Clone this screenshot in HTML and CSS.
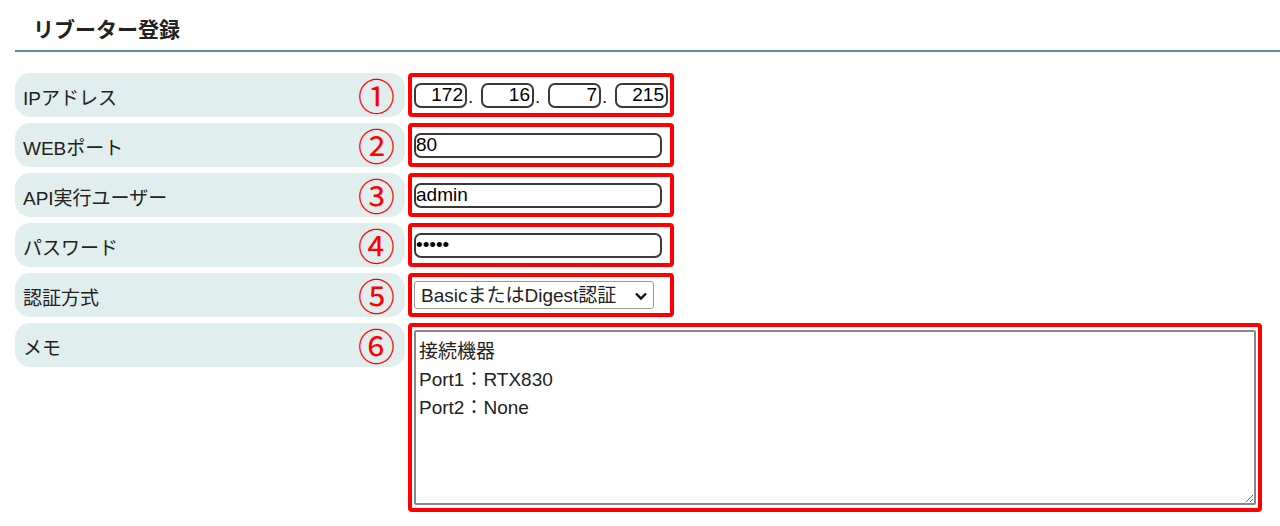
FILE: index.html
```html
<!DOCTYPE html>
<html lang="ja">
<head>
  <meta charset="UTF-8">
  <title>リブーター登録</title>
  <link rel="stylesheet" href="styles.css">
</head>
<body>

<div class="page">
  <h1 class="title">リブーター登録</h1>

  <div class="form">
    <div class="row">
      <div class="label">IPアドレス<span class="num">①</span></div>
      <div class="mark">
        <div class="ip">
          <input type="text" class="ip-part" value="172"><span class="dot">.</span>
          <input type="text" class="ip-part" value="16"><span class="dot">.</span>
          <input type="text" class="ip-part" value="7"><span class="dot">.</span>
          <input type="text" class="ip-part" value="215">
        </div>
      </div>
    </div>

    <div class="row">
      <div class="label">WEBポート<span class="num">②</span></div>
      <div class="mark"><input type="text" class="field" value="80"></div>
    </div>

    <div class="row">
      <div class="label">API実行ユーザー<span class="num">③</span></div>
      <div class="mark"><input type="text" class="field" value="admin"></div>
    </div>

    <div class="row">
      <div class="label">パスワード<span class="num">④</span></div>
      <div class="mark"><input type="password" class="field" value="admin"></div>
    </div>

    <div class="row">
      <div class="label">認証方式<span class="num">⑤</span></div>
      <div class="mark">
        <div class="select-wrap">
          <select class="auth">
            <option>BasicまたはDigest認証</option>
          </select>
          <svg class="chevron" width="14" height="10" viewBox="0 0 14 10">
            <path d="M2 2.5 L7 7.5 L12 2.5" fill="none" stroke="#111" stroke-width="2.4"/>
          </svg>
        </div>
      </div>
    </div>

    <div class="row">
      <div class="label">メモ<span class="num">⑥</span></div>
      <div class="mark wide">
        <textarea class="memo">接続機器
Port1：RTX830
Port2：None</textarea>
      </div>
    </div>
  </div>
</div>

</body>
</html>
```

FILE: styles.css
```css
body {
  margin: 0;
  font-family: "Liberation Sans", "Noto Sans CJK JP", sans-serif;
  color: #222;
  background: #fff;
}

.page {
  margin-left: 15px;
}

.title {
  margin: 0;
  height: 52px;
  box-sizing: border-box;
  padding: 13px 0 0 18px;
  font-size: 21px;
  font-weight: bold;
  border-bottom: 2px solid #5e8c8c;
}

.form {
  padding-top: 21px;
}

.row {
  display: flex;
  align-items: flex-start;
  margin-bottom: 6px;
}

.label {
  width: 390px;
  height: 44px;
  box-sizing: border-box;
  padding: 2px 10px 0 8px;
  display: flex;
  align-items: center;
  justify-content: space-between;
  background-color: #e1eeee;
  border-radius: 15px;
  font-size: 19px;
}

.num {
  color: #ff0000;
  font-family: "Noto Sans CJK JP", sans-serif;
  font-size: 37px;
  line-height: 1;
  margin-top: -2px;
}

.mark {
  margin-left: 3px;
  width: 266px;
  height: 44px;
  box-sizing: border-box;
  padding: 0 4px 0 2px;
  display: flex;
  align-items: center;
  border: 4px solid #ff0000;
  border-radius: 4px;
}

.mark.wide {
  width: 854px;
  height: 189px;
  padding: 3px 2px;
  align-items: stretch;
}

.ip {
  display: flex;
  align-items: center;
  font-size: 19px;
}

.ip-part {
  width: 53px;
  height: 25px;
  box-sizing: border-box;
  margin: 0;
  padding: 0 2px 0 0;
  text-align: right;
  font: 19px "Liberation Sans", sans-serif;
  border: 2px solid #3a3a3a;
  border-radius: 7px;
}

.dot {
  width: 14px;
  padding-left: 1px;
  padding-top: 3px;
  box-sizing: border-box;
}

.field {
  width: 248px;
  height: 25px;
  box-sizing: border-box;
  padding: 0;
  font: 19px "Liberation Sans", sans-serif;
  border: 2px solid #3a3a3a;
  border-radius: 7px;
}

.select-wrap {
  position: relative;
  display: flex;
}

.auth {
  appearance: none;
  width: 240px;
  height: 28px;
  padding: 0 0 0 6px;
  font: 19px "Liberation Sans", "Noto Sans CJK JP", sans-serif;
  color: #222;
  background: #fff;
  border: 1px solid #999;
  border-radius: 3px;
}

.chevron {
  position: absolute;
  right: 6px;
  top: 10px;
  pointer-events: none;
}

.memo {
  flex: 1;
  box-sizing: border-box;
  padding: 6px 3px;
  font: 19px/28px "Liberation Sans", "Noto Sans CJK JP", sans-serif;
  color: #222;
  border: 2px solid #888;
  border-radius: 2px;
  resize: both;
}
```
